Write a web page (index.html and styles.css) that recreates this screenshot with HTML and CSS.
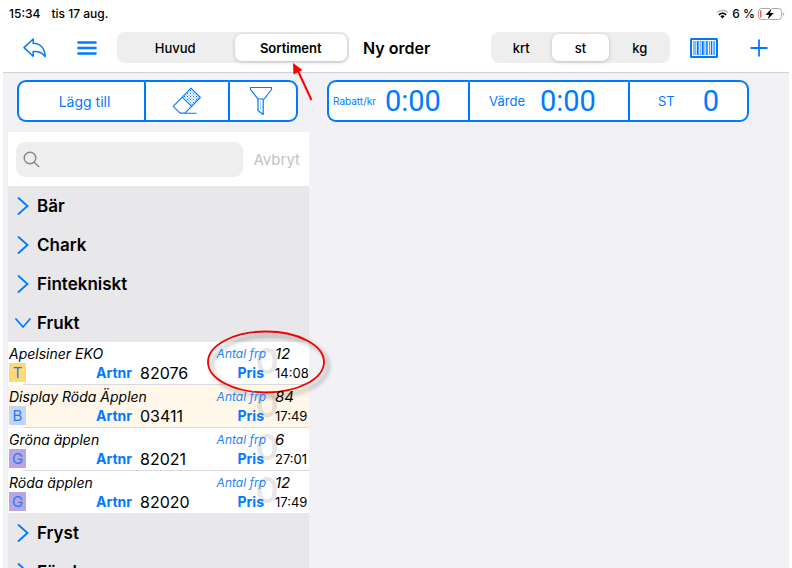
FILE: index.html
```html
<!DOCTYPE html>
<html lang="sv">
  <head>
    <meta charset="UTF-8" />
    <meta name="viewport" content="width=device-width, initial-scale=1.0" />
    <title>Ny order</title>
    <link rel="stylesheet" href="styles.css">
  </head>

  <body>
    <div class="app">
      <div class="statusbar">
        <span>15:34</span>
        <span>tis 17 aug.</span>
        <div class="device">
          <svg width="13" height="10" viewBox="0 0 13 10">
            <path d="M1 3.6a8 8 0 0 1 11 0" fill="none" stroke="#c4c4c4" stroke-width="1.7" />
            <path d="M2.9 5.8a5.2 5.2 0 0 1 7.2 0" fill="none" stroke="#000" stroke-width="1.7" />
            <path d="M4.4 7.3a3 3 0 0 1 4.2 0L6.5 9.5z" fill="#000" />
          </svg>
          <span>6 %</span>
          <svg width="27" height="12" viewBox="0 0 27 12">
            <rect x="0.5" y="0.5" width="23" height="11" rx="3" fill="#fff" stroke="#a9a9a9" />
            <rect x="2" y="2.5" width="1.5" height="7" fill="#ff5a50" />
            <path d="M25 4.2v3.6q1.300-.6 1.300-1.800t-1.300-1.800z" fill="#a9a9a9" />
            <path d="M13.500 0.500L7.500 6.900h3.600L9.600 11.600l6.200-6.600h-3.700z" fill="#000" stroke="#fff" stroke-width="2" paint-order="stroke" />
          </svg>
        </div>
      </div>

      <header class="navbar">
        <button class="iconBtn back" aria-label="Tillbaka">
          <svg width="24" height="20" viewBox="0 0 24 20">
            <path d="M10.2 1L1 9.600l9.200 8.600v-4.600c5.400-.4 9 .9 11.900 5C22 10.500 17.500 5.500 10.200 5.200z" fill="none" stroke="#007aff" stroke-width="1.500" stroke-linejoin="round" />
          </svg>
        </button>
        <button class="iconBtn menu" aria-label="Meny">
          <svg width="20" height="14" viewBox="0 0 20 14">
            <path d="M1.500 1.500h17M1.500 7h17M1.500 12.500h17" stroke="#007aff" stroke-width="2.600" stroke-linecap="round" />
          </svg>
        </button>
        <div class="segment views">
          <button>Huvud</button>
          <button class="active">Sortiment</button>
        </div>
        <h1>Ny order</h1>
        <div class="segment units">
          <button>krt</button>
          <button class="active">st</button>
          <button>kg</button>
        </div>
        <button class="iconBtn scan" aria-label="Streckkod">
          <svg width="28" height="20" viewBox="0 0 28 20">
            <rect x="1" y="1" width="26" height="18" rx="0.500" fill="none" stroke="#007aff" stroke-width="2" />
            <g fill="#007aff">
              <rect x="3.500" y="3" width="1" height="14" />
              <rect x="5.500" y="3" width="0.700" height="14" />
              <rect x="7" y="3" width="1.700" height="14" />
              <rect x="9.800" y="3" width="0.700" height="14" />
              <rect x="11.700" y="3" width="2" height="14" />
              <rect x="14.600" y="3" width="0.700" height="14" />
              <rect x="16.200" y="3" width="1.500" height="14" />
              <rect x="19" y="3" width="0.700" height="14" />
              <rect x="20.800" y="3" width="1.500" height="14" />
              <rect x="23.500" y="3" width="1.200" height="14" />
            </g>
          </svg>
        </button>
        <button class="iconBtn add" aria-label="Ny">
          <svg width="18" height="18" viewBox="0 0 18 18">
            <path d="M9 0.500v17M0.500 9h17" stroke="#007aff" stroke-width="1.800" />
          </svg>
        </button>
      </header>

      <div class="toolbar">
        <div class="actions">
          <button class="addRow">Lägg till</button>
          <button class="erase" aria-label="Radera">
            <svg width="30" height="28" viewBox="0 0 30 28">
              <defs>
                <pattern id="dots" width="3" height="3" patternUnits="userSpaceOnUse">
                  <rect width="1" height="1" fill="#007aff" />
                  <rect x="1.500" y="1.500" width="1" height="1" fill="#007aff" />
                </pattern>
              </defs>
              <path d="M19 1.200l9.300 9.300-8.800 8.600-9.400-9z" fill="url(#dots)" />
              <path d="M19 1.200l9.300 9.300-15.400 15.600H8L1.200 19.300zM10.100 10.100l9.400 9M8 26.200h16.500" fill="none" stroke="#007aff" stroke-width="1.100" stroke-linejoin="round" />
            </svg>
          </button>
          <button class="filter" aria-label="Filter">
            <svg width="24" height="30" viewBox="0 0 24 30">
              <path d="M1.500 1.500h21v2l-7.300 9.500H9L1.500 3.500zM9 13v11.500l5.200 4V13" fill="none" stroke="#007aff" stroke-width="1.200" stroke-linejoin="round" />
              <path d="M11.500 15v9" stroke="#8fc3ff" stroke-width="0.800" />
            </svg>
          </button>
        </div>
        <div class="totals">
          <div class="total discount"><span>Rabatt/kr</span><b>0:00</b></div>
          <div class="total value"><span>Värde</span><b>0:00</b></div>
          <div class="total count"><span>ST</span><b>0</b></div>
        </div>
      </div>

      <main class="panel">
        <form class="search">
          <label class="searchBox">
            <svg width="17" height="17" viewBox="0 0 17 17">
              <circle cx="7" cy="7" r="5.800" fill="none" stroke="#85858a" stroke-width="1.400" />
              <path d="M11.200 11.200l4.500 4.300" stroke="#85858a" stroke-width="1.500" stroke-linecap="round" />
            </svg>
            <input type="search" aria-label="Sök" />
          </label>
          <button type="button" class="cancel">Avbryt</button>
        </form>

        <button class="group"><svg viewBox="0 0 16 18"><path d="M3.500 1l9 8-9 8" /></svg>Bär</button>
        <button class="group"><svg viewBox="0 0 16 18"><path d="M3.500 1l9 8-9 8" /></svg>Chark</button>
        <button class="group"><svg viewBox="0 0 16 18"><path d="M3.500 1l9 8-9 8" /></svg>Fintekniskt</button>
        <button class="group"><svg viewBox="0 0 16 18"><path d="M1 5l7 8 7-8" /></svg>Frukt</button>

        <ul class="items">
          <li class="item">
            <b class="ghost">0</b>
            <span class="name">Apelsiner EKO</span>
            <span class="packLabel">Antal frp</span>
            <span class="pack">12</span>
            <span class="badge yellow">T</span>
            <span class="artLabel">Artnr</span>
            <span class="art">82076</span>
            <span class="priceLabel">Pris</span>
            <span class="price">14:08</span>
          </li>
          <li class="item selected">
            <b class="ghost">0</b>
            <span class="name">Display Röda Äpplen</span>
            <span class="packLabel">Antal frp</span>
            <span class="pack">84</span>
            <span class="badge blue">B</span>
            <span class="artLabel">Artnr</span>
            <span class="art">03411</span>
            <span class="priceLabel">Pris</span>
            <span class="price">17:49</span>
          </li>
          <li class="item">
            <b class="ghost">0</b>
            <span class="name">Gröna äpplen</span>
            <span class="packLabel">Antal frp</span>
            <span class="pack">6</span>
            <span class="badge purple">G</span>
            <span class="artLabel">Artnr</span>
            <span class="art">82021</span>
            <span class="priceLabel">Pris</span>
            <span class="price">27:01</span>
          </li>
          <li class="item">
            <b class="ghost">0</b>
            <span class="name">Röda äpplen</span>
            <span class="packLabel">Antal frp</span>
            <span class="pack">12</span>
            <span class="badge purple">G</span>
            <span class="artLabel">Artnr</span>
            <span class="art">82020</span>
            <span class="priceLabel">Pris</span>
            <span class="price">17:49</span>
          </li>
        </ul>

        <button class="group"><svg viewBox="0 0 16 18"><path d="M3.500 1l9 8-9 8" /></svg>Fryst</button>
        <button class="group"><svg viewBox="0 0 16 18"><path d="M3.500 1l9 8-9 8" /></svg>Färskvaror</button>
      </main>
    </div>

    <!-- arrow and ring drawn over the page -->
    <svg class="arrow" width="24" height="42" viewBox="0 0 24 42">
      <path d="M20.500 38L7 9" stroke="#f00" stroke-width="2" />
      <path d="M2 1l9.500 7L2.500 12.500z" fill="#f00" />
    </svg>
    <svg class="ring" width="130" height="80" viewBox="0 0 130 80">
      <ellipse cx="61" cy="33" rx="58" ry="30.500" fill="none" stroke="#f00000" stroke-width="1.800" />
    </svg>
  </body>
</html>
```
FILE: styles.css
```css
* {
  box-sizing: border-box;
}

body {
  margin: 0;
  background: #fff;
  color: #000;
  font-family: Inter, "Liberation Sans", sans-serif;
}

button {
  margin: 0;
  padding: 0;
  border: none;
  background: transparent;
  color: inherit;
  font-family: inherit;
}

svg {
  display: block;
  flex: none;
}

.app {
  display: flex;
  flex-direction: column;
  height: 100vh;
  margin: 0 3px;
  overflow: hidden;
  background: #f2f1f6;
}

/* status bar */
.statusbar {
  display: flex;
  align-items: center;
  flex: none;
  gap: 11px;
  height: 27px;
  padding: 0 4px 0 6px;
  background: #fff;
  font-size: 12px;
  font-weight: 500;
}

.device {
  display: flex;
  align-items: center;
  gap: 3px;
  margin-left: auto;
}

/* navigation */
.navbar {
  display: flex;
  align-items: center;
  flex: none;
  height: 46px;
  padding: 0 21px 4px 20px;
  border-bottom: 1px solid #d0d0d3;
  background: #fff;
}

.menu {
  margin: 0 20px 0 30px;
}

.segment {
  display: flex;
  gap: 3px;
  height: 31px;
  padding: 2px;
  border-radius: 8px;
  background: #eeeeef;
}

.segment button {
  flex: 1;
  border-radius: 7px;
  font-size: 13px;
  font-weight: 500;
}

.segment .active {
  background: #fff;
  box-shadow: 0 1px 4px rgba(0, 0, 0, 0.2);
}

.views {
  flex: 0 1 232px;
}

.views .active {
  font-weight: 600;
}

.units {
  flex: 0 1 179px;
  margin-left: auto;
}

h1 {
  margin: 0 0 0 14px;
  font-size: 16px;
  font-weight: 600;
  white-space: nowrap;
}

.scan {
  margin: 0 32px 0 20px;
}

/* toolbar */
.toolbar {
  display: flex;
  flex: none;
  gap: 29px;
  padding: 7px 40px 10px 14px;
  color: #007aff;
}

.actions {
  display: grid;
  flex: 0 1 281px;
  grid-template-columns: 127fr 84fr 70fr;
}

.totals {
  display: grid;
  flex: 0 1 422px;
  grid-template-columns: 141fr 160fr 121fr;
}

.actions button,
.total {
  display: flex;
  align-items: center;
  height: 42px;
  border: 2px solid #007aff;
  border-right-width: 0;
  background: #fff;
}

.actions button {
  justify-content: center;
}

.actions button:first-child,
.total:first-child {
  border-radius: 9px 0 0 9px;
}

.actions button:last-child,
.total:last-child {
  border-right-width: 2px;
  border-radius: 0 9px 9px 0;
}

.actions .addRow {
  padding-left: 6px;
  font-size: 14px;
}

.actions .filter {
  padding-right: 4px;
}

.total span {
  font-size: 13px;
}

.total b {
  font-family: Roboto, "Liberation Sans", sans-serif;
  font-size: 29px;
  font-weight: 400;
}

.discount {
  gap: 9px;
  padding-left: 4px;
}

.total.discount span {
  font-size: 10px;
}

.value {
  gap: 15px;
  padding-left: 19px;
}

.count {
  gap: 28px;
  padding-left: 28px;
}

/* assortment list */
.panel {
  flex: 1;
  width: 38%;
  min-width: 301px;
  min-height: 0;
  margin-left: 5px;
  overflow: hidden;
  background: #e8e8ea;
}

.search {
  display: flex;
  align-items: center;
  gap: 11px;
  height: 54px;
  padding: 0 9px 0 8px;
  background: #fff;
}

.searchBox {
  display: flex;
  align-items: center;
  flex: 1;
  gap: 6px;
  min-width: 0;
  height: 35px;
  padding: 0 7px;
  border-radius: 9px;
  background: #eeeeef;
}

.searchBox input {
  flex: 1;
  min-width: 0;
  border: none;
  outline: none;
  background: transparent;
  font-family: inherit;
  font-size: 15px;
}

.cancel {
  color: #c3c3c6;
  font-size: 15px;
}

.group {
  display: flex;
  align-items: center;
  gap: 6px;
  width: 100%;
  height: 39px;
  padding-left: 7px;
  font-size: 17px;
  font-weight: 600;
}

.group svg {
  width: 16px;
  height: 18px;
  fill: none;
  stroke: #007aff;
  stroke-width: 1.8;
  stroke-linecap: round;
}

.items {
  margin: 0;
  padding: 0;
  list-style: none;
}

.item {
  position: relative;
  display: grid;
  grid-template-columns: 17px 98px 1fr 52px 34px;
  grid-template-rows: 19px 19px;
  align-items: center;
  column-gap: 8px;
  height: 43px;
  padding: 2px 0 0 1px;
  background: #fff;
  font-size: 14px;
  white-space: nowrap;
}

.item::after {
  content: "";
  position: absolute;
  right: 0;
  bottom: 0;
  left: 15px;
  height: 1px;
  background: #dadadc;
}

.item:last-child {
  height: 42px;
}

.item:last-child::after {
  display: none;
}

.selected {
  background: #fff7e9;
}

.item span {
  z-index: 1;
}

/* pale ordered amount behind the texts */
.ghost {
  position: absolute;
  top: 0;
  right: 30px;
  color: rgba(0, 0, 0, 0.11);
  font-size: 36px;
  font-weight: 600;
  line-height: 38px;
}

.name {
  grid-column: 1 / 4;
  font-style: italic;
}

.packLabel {
  padding-right: 1px;
  color: #1f84f5;
  font-size: 12px;
  font-style: italic;
  text-align: right;
}

.pack {
  font-size: 15px;
  font-style: italic;
}

.badge {
  height: 19px;
  color: #1f7cf0;
  font-size: 15px;
  line-height: 19px;
  text-align: center;
}

.yellow {
  background: #ffd879;
}

.blue {
  background: #c5d5f5;
}

.purple {
  background: #b9a5e2;
}

.artLabel,
.priceLabel {
  color: #007aff;
  font-weight: 700;
  text-align: right;
}

.priceLabel {
  padding-right: 3px;
}

.art {
  font-size: 16px;
}

.price {
  font-size: 13px;
}

/* annotations */
.arrow {
  position: absolute;
  top: 62px;
  left: 291px;
}

.ring {
  position: absolute;
  top: 329px;
  left: 205px;
  filter: drop-shadow(4px 4px 2px rgba(0, 0, 0, 0.4));
}
```
